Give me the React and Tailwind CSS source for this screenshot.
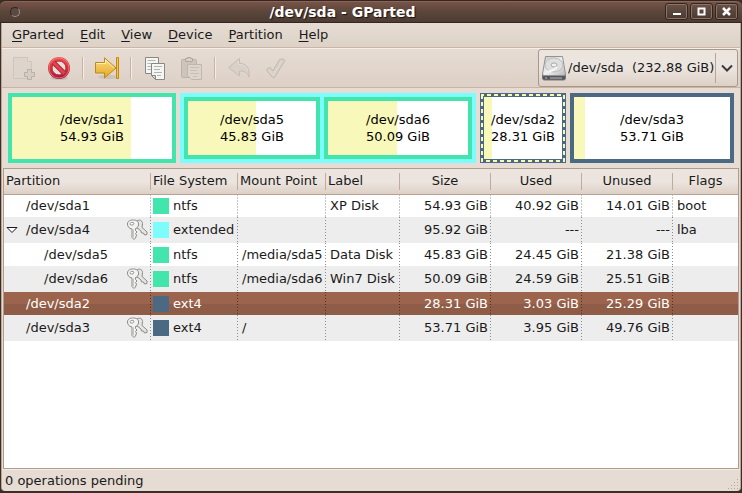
import React from "react";

const GREEN = "bg-[#42e5ac]";
const CYAN = "bg-[#7dfcfe]";
const BLUE = "bg-[#4b6983]";

const menus = ["GParted", "Edit", "View", "Device", "Partition", "Help"];

const rows = [
  { name: "/dev/sda1", fs: "ntfs", color: GREEN, mount: "", label: "XP Disk", size: "54.93 GiB", used: "40.92 GiB", unused: "14.01 GiB", flags: "boot" },
  { name: "/dev/sda4", open: true, locked: true, fs: "extended", color: CYAN, mount: "", label: "", size: "95.92 GiB", used: "---", unused: "---", flags: "lba" },
  { name: "/dev/sda5", child: true, fs: "ntfs", color: GREEN, mount: "/media/sda5", label: "Data Disk", size: "45.83 GiB", used: "24.45 GiB", unused: "21.38 GiB", flags: "" },
  { name: "/dev/sda6", child: true, locked: true, fs: "ntfs", color: GREEN, mount: "/media/sda6", label: "Win7 Disk", size: "50.09 GiB", used: "24.59 GiB", unused: "25.51 GiB", flags: "" },
  { name: "/dev/sda2", selected: true, fs: "ext4", color: BLUE, mount: "", label: "", size: "28.31 GiB", used: "3.03 GiB", unused: "25.29 GiB", flags: "" },
  { name: "/dev/sda3", locked: true, fs: "ext4", color: BLUE, mount: "/", label: "", size: "53.71 GiB", used: "3.95 GiB", unused: "49.76 GiB", flags: "" },
];

function NewIcon() {
  return (
    <svg width="24" height="24" viewBox="0 0 24 24" fill="none">
      <path d="M2.500 1.500h14l4 4v17h-18z" fill="#ddd5cc" stroke="#cdc6bf" />
      <path d="M16.500 1.500v4h4" fill="#e8e0d9" stroke="#cdc6bf" />
      <path d="M16.500 13.500h4v3h3v4h-3v3h-4v-3h-3v-4h3z" fill="#d5cdc4" stroke="#b8b1a9" />
    </svg>
  );
}

function StopIcon() {
  return (
    <svg width="24" height="24" viewBox="0 0 24 24" fill="none">
      <defs>
        <linearGradient id="stopRed" x1="0" y1="0" x2="0" y2="1">
          <stop offset="0" stopColor="#ef5350" />
          <stop offset="0.550" stopColor="#d4303a" />
          <stop offset="1" stopColor="#a01540" />
        </linearGradient>
      </defs>
      <ellipse cx="12" cy="22" rx="9" ry="2" fill="#c9bfb5" />
      <circle cx="12" cy="12" r="11" fill="url(#stopRed)" />
      <circle cx="12" cy="12" r="10" stroke="#f08a85" strokeOpacity="0.700" />
      <circle cx="12" cy="12" r="7" fill="#e9dfd9" stroke="#b3243a" />
      <path d="M6.500 6.500l11 11" stroke="#b3243a" strokeWidth="5" />
      <path d="M6.500 6.500l11 11" stroke="#e0444a" strokeWidth="3" />
    </svg>
  );
}

function ApplyMoveIcon() {
  return (
    <svg width="26" height="24" viewBox="0 0 26 24" fill="none">
      <defs>
        <linearGradient id="moveGold" x1="0" y1="0" x2="0" y2="1">
          <stop offset="0" stopColor="#fbe08a" />
          <stop offset="1" stopColor="#e3a51e" />
        </linearGradient>
      </defs>
      <ellipse cx="14" cy="21" rx="10" ry="2" fill="#cdc3b9" />
      <path d="M1.500 6.500h9V1.800L22 12 10.500 22v-5h-9z" fill="url(#moveGold)" stroke="#c18a10" />
      <path d="M2.500 7.500h9V4l8.500 8" stroke="#fff0b8" />
      <path d="M22.500 1.500h2v21h-2z" fill="#f3c64b" stroke="#c18a10" />
    </svg>
  );
}

function CopyIcon() {
  return (
    <svg width="24" height="24" viewBox="0 0 24 24" fill="none">
      <path d="M2.500 1.500h13v16h-13z" fill="#f5f5f3" stroke="#868984" />
      <path d="M4.500 4.500h8M4.500 7.500h7M4.500 10.500h4M4.500 13.500h4" stroke="#b2b4af" />
      <path d="M8.500 7.500h13v16h-9l-4-4z" fill="#f5f5f3" stroke="#868984" />
      <path d="M12.500 23.500v-4h-4z" fill="#d8d9d6" stroke="#868984" />
      <path d="M11 10.500h8M11 13.500h6M11 16.500h8M14 19.500h4" stroke="#b2b4af" />
    </svg>
  );
}

function PasteIcon() {
  return (
    <svg width="24" height="24" viewBox="0 0 24 24" fill="none">
      <rect x="2.500" y="3.500" width="15" height="18" rx="1" fill="#cdc5bb" stroke="#bbb3aa" />
      <path d="M6.500 5.500v-3h2v-1h3v1h2v3z" fill="#d8d0c8" stroke="#afa79e" />
      <path d="M8.500 8.500h14v15h-10l-4-4z" fill="#ddd5cc" stroke="#bfb7ae" />
      <path d="M11 11.500h9M11 14.500h7M11 17.500h9M14 20.500h4" stroke="#c8c0b7" />
    </svg>
  );
}

function UndoIcon() {
  return (
    <svg width="24" height="24" viewBox="0 0 24 24" fill="none">
      <path d="M12.500 2.500v5c7 0 10.500 5 9.500 13.500-1.500-4-4-6-9.500-6v5L1.500 11.500z" fill="#d9d1c8" stroke="#c4bdb4" strokeLinejoin="round" />
      <path d="M11.500 5v3.500c5 0 8.500 2 9.500 6" stroke="#e5ddd5" />
    </svg>
  );
}

function CheckIcon() {
  return (
    <svg width="24" height="24" viewBox="0 0 24 24" fill="none">
      <path d="M3.500 14l3-3 3.500 4L16.500 3.500l4-.5 1.500 1.500L11.500 21.500H9.500z" fill="#d9d1c8" stroke="#c0b8af" strokeLinejoin="round" />
      <path d="M5 14l5 5L19 5" stroke="#e3dbd3" />
    </svg>
  );
}

function DiskIcon() {
  return (
    <svg width="26" height="26" viewBox="0 0 26 26" fill="none">
      <defs>
        <linearGradient id="diskTop" x1="0" y1="0" x2="1" y2="1">
          <stop offset="0" stopColor="#c4c4c4" />
          <stop offset="0.500" stopColor="#f0f0f0" />
          <stop offset="1" stopColor="#b8b8b8" />
        </linearGradient>
      </defs>
      <path d="M1.500 19.500h23v4l-1 1.500h-21l-1-1.500z" fill="#55575a" stroke="#77797b" />
      <path d="M4.500 1.500h17L24.500 19l-1 1.500h-21l-1-1.500z" fill="url(#diskTop)" stroke="#929292" />
      <ellipse cx="13" cy="10" rx="9" ry="7" fill="#dedede" stroke="#bcbcbc" />
      <ellipse cx="13" cy="10" rx="3" ry="2" fill="#f1f1f1" stroke="#aaa" />
      <path d="M7 17l5-2 4-3" stroke="#f8f8f8" strokeWidth="2" />
      <path d="M4 23h2M9 23h12" stroke="#b9bbbd" />
    </svg>
  );
}

function KeysIcon() {
  return (
    <svg width="22" height="22" viewBox="0 0 22 22" fill="none" aria-label="Locked" strokeLinejoin="round">
      <path d="M9 3.500l2.500-2c3-1 5 .5 5 3l-.5 4 5 4.500v2.500l-2.500.5-1-2h-2l-.5-2-3-2.500-3-1z" fill="#e6e6e4" stroke="#8a8a87" />
      <path d="M1.500 5c0-3 3-4.200 6-4 3.500 0 5.500 2 5 5-.5 2-1.500 3-3 3.500v2l1.500 1.500-1.500 1.500 1 1.500-1 3-1.500 1.500-2-2V10c-3-.5-4.500-2.500-4.500-5z" fill="#f3f3f1" stroke="#8a8a87" />
      <path d="M4 4.500c1-1.500 3-1.500 4-.5l-1 2H4.500z" fill="#fff" stroke="#9c9c99" />
      <path d="M7.500 10.500v8" stroke="#c4c4c1" />
    </svg>
  );
}

function ToolButton({ label, disabled, children }) {
  return (
    <button aria-label={label} disabled={disabled} className="flex h-9 w-9 items-center justify-center">
      {children}
    </button>
  );
}

function ToolSeparator() {
  return (
    <div className="flex w-3 justify-center">
      <div className="h-[22px] w-[2px] border-l border-[#c9b3a4] bg-[#f3ede8]" />
    </div>
  );
}

function WindowButton({ label, children }) {
  return (
    <button aria-label={label} className="flex h-[17px] w-[23px] items-center justify-center rounded-[3px] border border-[#33261f] bg-linear-to-b from-[#6a5248] to-[#4a3931] shadow-[inset_0_0_0_1px_#8a7469]">
      {children}
    </button>
  );
}

function Volume({ name, size, usedWidth, className, dashed }) {
  return (
    <div className={`relative flex basis-0 border-4 bg-white ${className}`}>
      <div className="h-full shrink-0 bg-[#f8f8ba]" style={{ width: usedWidth }} />
      <div className="absolute inset-0 flex flex-col items-center justify-center text-center leading-[17px] whitespace-nowrap text-black">
        <span>{name}</span>
        <span>{size}</span>
      </div>
      {dashed && (
        <div className="absolute -inset-1">
          <svg className="block h-full w-full" viewBox="0 0 86 70" preserveAspectRatio="none" fill="none">
            <rect x="2" y="2" width="82" height="66" stroke="#f8f8ba" strokeWidth="2" strokeDasharray="4 3" strokeDashoffset="2" />
          </svg>
        </div>
      )}
    </div>
  );
}

function Head({ children, align, last }) {
  return (
    <th scope="col" className="h-[25px] border-b border-[#b5a294] p-0 font-normal">
      <div className={`flex h-[17px] items-center whitespace-nowrap ${align} ${last ? "" : "border-r border-[#c0ac9e]"}`}>{children}</div>
    </th>
  );
}

const dots = "bg-[linear-gradient(#8c8c8c_1px,transparent_1px)] bg-[length:1px_3px] bg-right-top bg-repeat-y";
const darkDots = "bg-[linear-gradient(#4d3226_1px,transparent_1px)] bg-[length:1px_3px] bg-right-top bg-repeat-y";

function Row({ row, index }) {
  const tone = row.selected
    ? "h-[23px] bg-linear-to-b from-[#9c644c] from-50% to-[#8e5c47] to-50% text-white"
    : index % 2
      ? "h-[26px] bg-[#ededed]"
      : "h-[23px] bg-white";
  const line = row.selected ? darkDots : dots;
  return (
    <tr className={tone} aria-selected={!!row.selected}>
      <td className={`p-0 ${line}`}>
        <div className={`flex items-center pr-[3px] ${row.child ? "pl-10" : row.open ? "pl-[2px]" : "pl-[22px]"}`}>
          {row.open && (
            <button aria-label="Collapse" className="mr-2 flex w-3 justify-center">
              <svg width="12" height="8" viewBox="0 0 12 8">
                <path d="M1 1.500h10L6 6.500z" fill="#fff" stroke="#1a1a1a" />
              </svg>
            </button>
          )}
          <span className="flex-1">{row.name}</span>
          {row.locked && <KeysIcon />}
        </div>
      </td>
      <td className={`p-0 ${line}`}>
        <div className="flex items-center gap-1 pl-[2px]">
          <span className={`h-4 w-4 shrink-0 ${row.color}`} />
          {row.fs}
        </div>
      </td>
      <td className={`p-0 pl-1 ${line}`}>{row.mount}</td>
      <td className={`p-0 pl-1 ${line}`}>{row.label}</td>
      <td className={`p-0 pr-[3px] text-right ${line}`}>{row.size}</td>
      <td className={`p-0 pr-[3px] text-right ${line}`}>{row.used}</td>
      <td className={`p-0 pr-[3px] text-right ${line}`}>{row.unused}</td>
      <td className="p-0 pl-1">{row.flags}</td>
    </tr>
  );
}

export default function App() {
  return (
    <div className="flex h-screen flex-col overflow-hidden bg-[#3b2e28] font-['DejaVu_Sans',sans-serif] text-[13px] leading-4 text-[#1a1a1a]">
      <header className="flex h-[23px] shrink-0 items-center rounded-t-md border-t border-b border-t-[#33261f] border-b-[#33261f] bg-linear-to-b from-[#7a5448] via-[#5c463b] to-[#4d3c32] px-1 shadow-[inset_0_1px_0_#8a665a]">
        <div className="flex pl-[6px]">
          <button aria-label="Window menu" className="h-[10px] w-[10px] rounded-full border border-[#a09088] border-t-[#33261f] border-l-[#33261f] bg-[#5a4a42]" />
        </div>
        <h1 className="flex-1 text-center text-[14px] font-bold text-white [text-shadow:1px_1px_1px_#1c1410]">/dev/sda - GParted</h1>
        <div className="flex justify-end gap-[2px]">
          <WindowButton label="Minimize">
            <svg width="9" height="9" viewBox="0 0 9 9"><path d="M1 6h8v2H1z" fill="#fff" /></svg>
          </WindowButton>
          <WindowButton label="Maximize">
            <svg width="9" height="9" viewBox="0 0 9 9"><path d="M1.500 1.500h6v6h-6z" fill="none" stroke="#fff" strokeWidth="2" /></svg>
          </WindowButton>
          <WindowButton label="Close">
            <svg width="9" height="9" viewBox="0 0 9 9"><path d="M1 1l7 7M8 1L1 8" stroke="#fff" strokeWidth="2.500" /></svg>
          </WindowButton>
        </div>
      </header>

      <div className="mx-px mb-[2px] flex min-h-0 flex-1 flex-col rounded-b-sm border-x border-x-[#b9a79a] bg-[#e6dcd3]">
        <nav className="flex h-[25px] shrink-0 items-center border-b border-[#cbb5a6] bg-linear-to-b from-[#e6dcd4] to-[#ddd2c7] pl-[2px]">
          {menus.map((m) => (
            <button key={m} className="px-2">
              <span className="underline underline-offset-2">{m[0]}</span>
              {m.slice(1)}
            </button>
          ))}
        </nav>

        <div className="flex h-10 shrink-0 items-center border-t border-b border-t-[#f5efeb] border-b-[#c9b3a4] bg-linear-to-b from-[#e6dcd4] to-[#ddd0c6] pl-[3px]">
          <ToolButton label="New" disabled><NewIcon /></ToolButton>
          <ToolButton label="Delete"><StopIcon /></ToolButton>
          <ToolSeparator />
          <ToolButton label="Resize/Move"><ApplyMoveIcon /></ToolButton>
          <ToolSeparator />
          <ToolButton label="Copy"><CopyIcon /></ToolButton>
          <ToolButton label="Paste" disabled><PasteIcon /></ToolButton>
          <ToolSeparator />
          <ToolButton label="Undo" disabled><UndoIcon /></ToolButton>
          <ToolButton label="Apply" disabled><CheckIcon /></ToolButton>
          <div className="relative ml-auto mr-[2px] flex h-[38px] w-[200px] items-center rounded-[3px] border border-[#a99788] bg-linear-to-b from-[#ece5de] via-[#ece5df] to-[#ddd0c6]">
            <span className="pointer-events-none absolute left-[2px]"><DiskIcon /></span>
            <select aria-label="Device" className="h-full w-full appearance-none bg-transparent pl-[29px] whitespace-pre outline-none">
              <option>{"/dev/sda\u00a0 (232.88 GiB)"}</option>
            </select>
            <span className="pointer-events-none absolute right-0 flex h-[30px] w-[22px] items-center justify-center border-l border-[#b8a698]">
              <svg width="12" height="8" viewBox="0 0 12 8" fill="none"><path d="M1 1.500l5 5 5-5" stroke="#3a3a3a" strokeWidth="2" /></svg>
            </span>
          </div>
        </div>

        <section aria-label="Disk layout" className="mt-[5px] mb-[5px] flex h-[70px] shrink-0 gap-1 px-[6px]">
          <Volume name="/dev/sda1" size="54.93 GiB" usedWidth="74.5%" className="grow-160 border-[#42e5ac]" />
          <div className="flex grow-288 basis-0 gap-1 border-4 border-[#7dfcfe] bg-[#7dfcfe]">
            <Volume name="/dev/sda5" size="45.83 GiB" usedWidth="53.2%" className="grow-128 border-[#42e5ac]" />
            <Volume name="/dev/sda6" size="50.09 GiB" usedWidth="49.3%" className="grow-140 border-[#42e5ac]" />
          </div>
          <Volume name="/dev/sda2" size="28.31 GiB" usedWidth="10.3%" className="grow-78 border-[#4b6983]" dashed />
          <Volume name="/dev/sda3" size="53.71 GiB" usedWidth="7.1%" className="grow-156 border-[#4b6983]" />
        </section>

        <div className="mx-px min-h-0 flex-1 overflow-hidden border border-[#b09c8c] bg-white">
          <table className="w-full table-fixed border-collapse text-left">
            <colgroup>
              <col className="w-[147px]" />
              <col className="w-[87px]" />
              <col className="w-[88px]" />
              <col className="w-[74px]" />
              <col className="w-[91px]" />
              <col className="w-[91px]" />
              <col className="w-[91px]" />
              <col />
            </colgroup>
            <thead className="bg-linear-to-b from-[#ece5df] from-50% to-[#ddd0c6]">
              <tr>
                <Head align="pl-[2px]">Partition</Head>
                <Head align="pl-[2px]">File System</Head>
                <Head align="pl-[2px]">Mount Point</Head>
                <Head align="pl-[2px]">Label</Head>
                <Head align="justify-center">Size</Head>
                <Head align="justify-center">Used</Head>
                <Head align="justify-center">Unused</Head>
                <Head align="justify-center" last>Flags</Head>
              </tr>
            </thead>
            <tbody>
              {rows.map((row, i) => <Row key={row.name} row={row} index={i} />)}
            </tbody>
          </table>
        </div>

        <footer className="flex h-[22px] shrink-0 items-center justify-between border-t border-[#f3ede8] pl-[3px]">
          <span>0 operations pending</span>
          <svg width="12" height="12" viewBox="0 0 12 12" className="self-end" fill="#b8a698">
            <path d="M9 0h1v1H9zM6 3h1v1H6zM9 3h1v1H9zM3 6h1v1H3zM6 6h1v1H6zM9 6h1v1H9zM0 9h1v1H0zM3 9h1v1H3zM6 9h1v1H6zM9 9h1v1H9z" />
          </svg>
        </footer>
      </div>
    </div>
  );
}
